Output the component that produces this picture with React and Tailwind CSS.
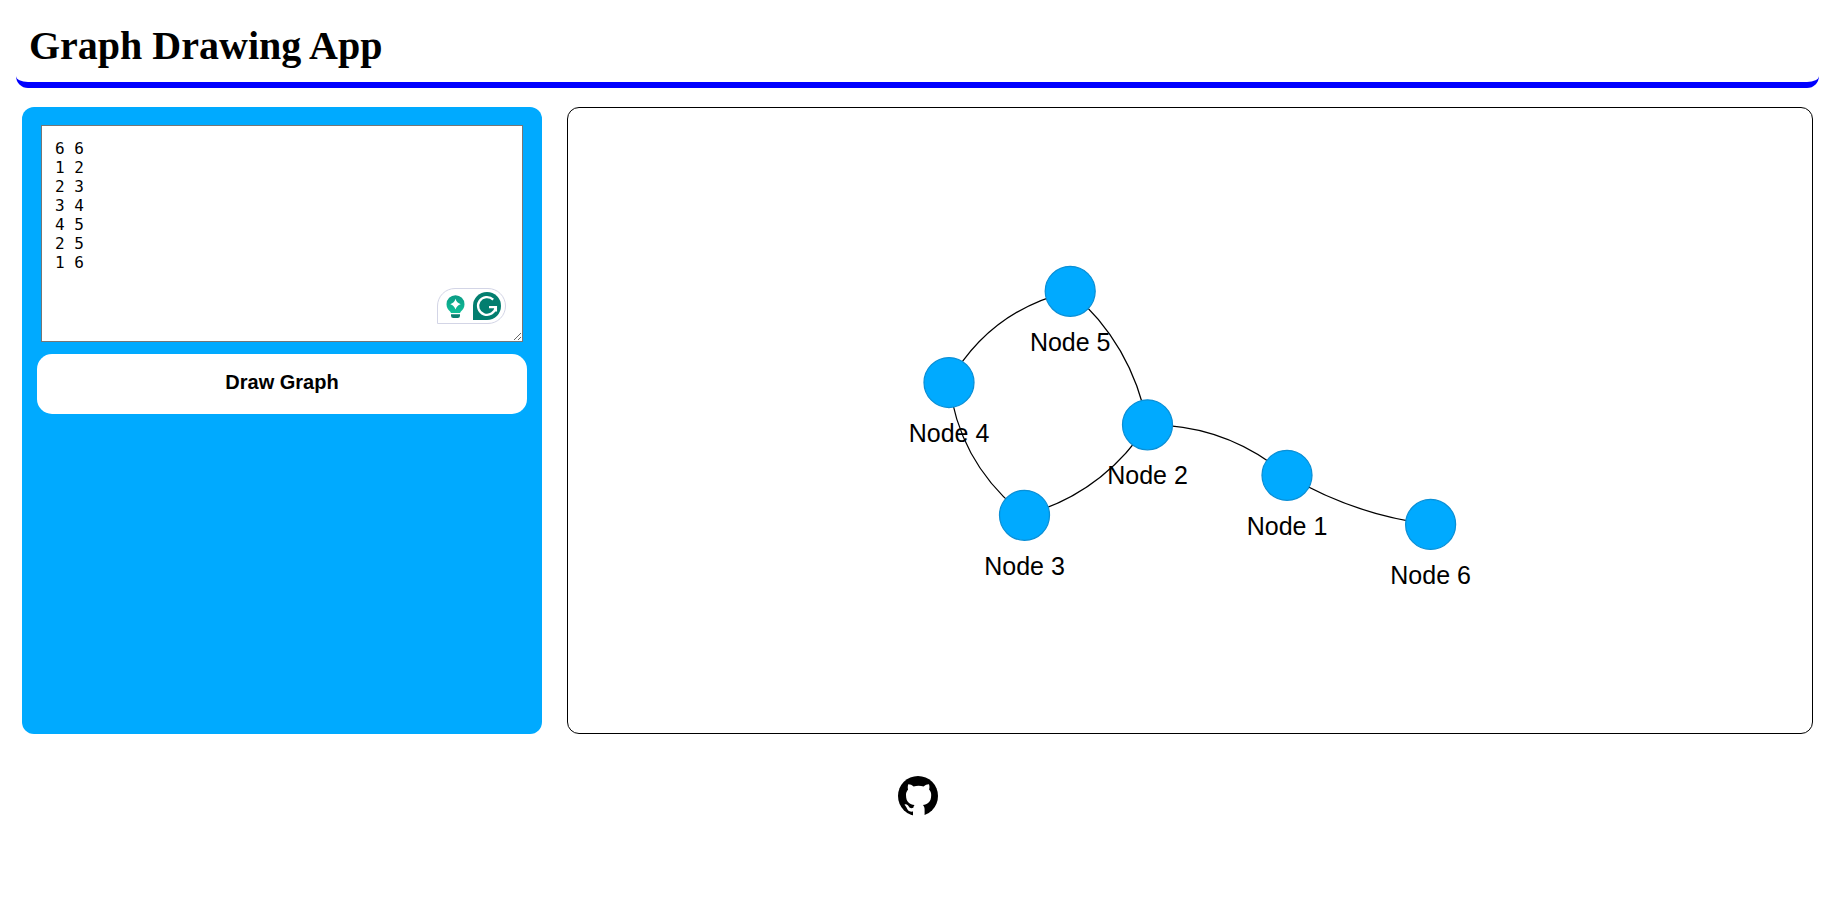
import { useState } from "react";

const INITIAL_INPUT = "6 6\n1 2\n2 3\n3 4\n4 5\n2 5\n1 6";

const nodes = [
  { id: 1, x: 719, y: 367.3 },
  { id: 2, x: 579.5, y: 316.8 },
  { id: 3, x: 456.5, y: 407.3 },
  { id: 4, x: 381, y: 274.5 },
  { id: 5, x: 502.2, y: 183.3 },
  { id: 6, x: 862.6, y: 416.4 },
];

// Each edge bends towards its own control point.
const edges = [
  { from: 1, to: 2, cx: 658, cy: 316 },
  { from: 2, to: 3, cx: 535, cy: 385 },
  { from: 3, to: 4, cx: 391, cy: 356 },
  { from: 4, to: 5, cx: 421.6, cy: 202.5 },
  { from: 2, to: 5, cx: 564, cy: 236 },
  { from: 1, to: 6, cx: 786, cy: 407 },
];

const nodeById = Object.fromEntries(nodes.map((n) => [n.id, n]));

function Graph() {
  return (
    <svg viewBox="0 0 1244 625" className="block h-auto w-full" role="img" aria-label="Graph">
      <g fill="none" stroke="#000" strokeWidth="1.25">
        {edges.map(({ from, to, cx, cy }) => {
          const a = nodeById[from];
          const b = nodeById[to];
          return <path key={`${from}-${to}`} d={`M${a.x} ${a.y}Q${cx} ${cy} ${b.x} ${b.y}`} />;
        })}
      </g>
      {nodes.map(({ id, x, y }) => (
        <g key={id}>
          <circle cx={x} cy={y} r="25" fill="#00aaff" stroke="#0a8fd6" strokeWidth="1.25" />
          <text
            x={x}
            y={y + 59.4}
            textAnchor="middle"
            className="font-['Liberation_Sans',Arial,sans-serif] text-[25px]"
          >
            {`Node ${id}`}
          </text>
        </g>
      ))}
    </svg>
  );
}

function WritingAssistant() {
  return (
    <div className="absolute right-[17px] bottom-[18px] flex h-9 w-[69px] items-center justify-between rounded-t-full rounded-br-full border border-[#d3d5e6] bg-white pr-1 pl-2">
      <svg width="20" height="26" viewBox="0 0 20 26" aria-hidden="true">
        <defs>
          <linearGradient id="bulb" x1="0" y1="0" x2="0" y2="1">
            <stop offset="0" stopColor="#0b9b85" />
            <stop offset="1" stopColor="#0fbf98" />
          </linearGradient>
        </defs>
        <path
          d="M9.500 2.200a9 9 0 0 0-9 9c0 3.600 2 5.700 3.600 7.400.5.6.8 1.400.8 1.400h9.200s.3-.8.8-1.400c1.600-1.700 3.600-3.800 3.600-7.400a9 9 0 0 0-9-9z"
          fill="url(#bulb)"
        />
        <path d="M9.500 5.800q1.200 4.200 5.200 5.400-4 1.200-5.200 5.400-1.200-4.200-5.200-5.400 4-1.200 5.200-5.400z" fill="#fff" />
        <path d="M5 21.300h9v1.400q0 2.300-2.300 2.300H7.300Q5 25 5 22.700z" fill="#0b8070" />
      </svg>
      <svg width="28" height="28" viewBox="0 0 28 28" aria-hidden="true">
        <path d="M14 0a14 14 0 1 1 0 28H0V14A14 14 0 0 1 14 0z" fill="#027e6f" />
        <path
          d="M20.200 7.600A8.900 8.900 0 1 0 22.800 15.200H16M22.900 14.100V19.500"
          fill="none"
          stroke="#fff"
          strokeWidth="2.300"
        />
      </svg>
    </div>
  );
}

function GitHubMark() {
  return (
    <svg width="40" height="40" viewBox="0 0 40 40" aria-hidden="true">
      <circle cx="20" cy="20" r="20" />
      <path
        fill="#fff"
        d="M15 40.500V35.500C11 36.300 9.500 34 8.500 31.500 8 30.200 6.800 29.200 6.500 28.700 6.600 28 9 27.800 10.600 30.200 11.800 32.200 13.200 32.600 15.300 31.800 15.400 30.500 15.900 29.600 16.500 29 12 28.400 8 26.500 8 19 8 16.800 8.800 15 10.100 13.600 9.600 12 9.600 10 10.300 8.300 12 8.200 13.800 9 15.600 10.400Q20.600 9.200 25.600 10.400C27.500 9 29.200 8.200 31 8.300 31.600 10 31.600 12 31.100 13.600 32.500 15 33.200 16.800 33.200 19 33.200 26.500 29.200 28.400 24.800 29 26 30 26.600 31.500 26.600 33.500V40.500z"
      />
    </svg>
  );
}

export default function App() {
  const [input, setInput] = useState(INITIAL_INPUT);

  return (
    <div className="pt-4 pr-[11px] pb-4 pl-4 text-black">
      <header className="rounded-xl border-b-[6px] border-[#0000ff] px-[13px] pt-[7px] pb-[13px]">
        <h1 className="font-['Liberation_Serif','Times_New_Roman',serif] text-[40px] leading-[46px] font-bold">
          Graph Drawing App
        </h1>
      </header>

      <main className="mx-1.5 mt-[19px] grid grid-cols-[520fr_1246fr] gap-[25px]">
        <form
          className="flex min-w-0 flex-col gap-3 rounded-xl bg-[#00aaff] px-[15px] py-[18px]"
          onSubmit={(e) => e.preventDefault()}
        >
          <div className="relative mx-1">
            <textarea
              aria-label="Graph edges"
              value={input}
              onChange={(e) => setInput(e.target.value)}
              className="block h-[217px] w-full border border-[#767676] bg-white p-[13px] font-['DejaVu_Sans_Mono',monospace] text-base leading-[19px] outline-none"
            />
            <WritingAssistant />
          </div>
          <button
            type="submit"
            className="h-[60px] rounded-[15px] bg-white pb-1 font-['Liberation_Sans',Arial,sans-serif] text-xl font-bold"
          >
            Draw Graph
          </button>
        </form>

        <section className="min-w-0 rounded-xl border border-black">
          <Graph />
        </section>
      </main>

      <footer className="mt-[42px] flex justify-center">
        <a href="https://github.com" aria-label="GitHub">
          <GitHubMark />
        </a>
      </footer>
    </div>
  );
}
